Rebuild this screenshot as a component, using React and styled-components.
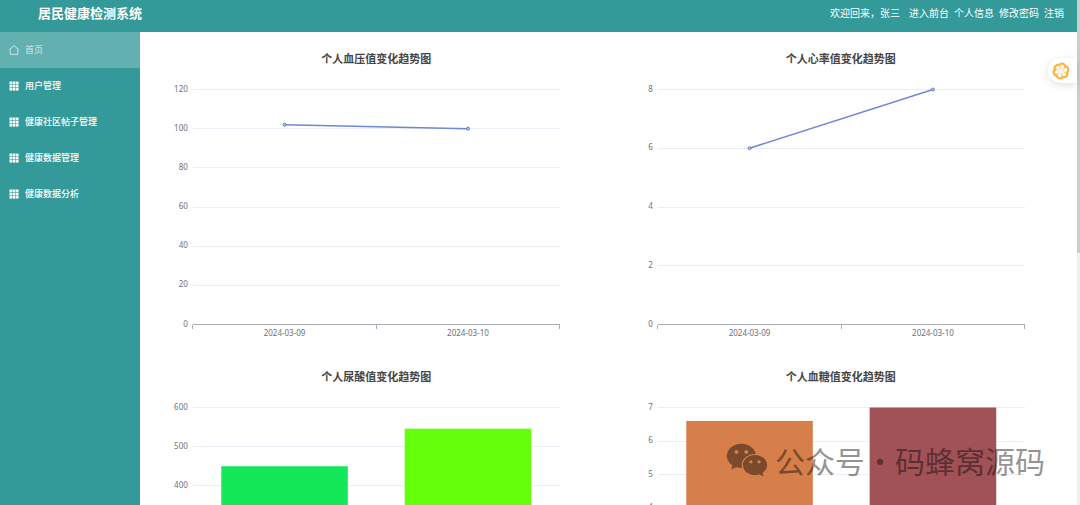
import { createGlobalStyle, styled } from "styled-components";
import { AiFillWechat } from "react-icons/ai";

const GlobalStyle = createGlobalStyle`
  * {
    box-sizing: border-box;
    margin: 0;
    padding: 0;
  }
  body {
    font-family: "Noto Sans", "Noto Sans CJK SC", sans-serif;
    background-color: #fff;
    overflow: hidden;
  }
  a {
    color: inherit;
    text-decoration: none;
  }
  ul {
    list-style: none;
  }
`;

const Shell = styled.div`
  display: flex;
  height: 100vh;
`;

const Page = styled.div`
  position: relative;
  flex: 1;
  min-width: 0;
  display: flex;
  flex-direction: column;
`;

const Header = styled.header`
  flex: none;
  display: flex;
  justify-content: space-between;
  align-items: center;
  height: 32px;
  padding: 0 13px 6px 38px;
  background-color: #339999;
  color: #fff;
  h1 {
    font-family: "Noto Sans CJK SC", sans-serif;
    font-size: 13px;
    line-height: 20px;
    font-weight: 700;
  }
`;

const UserNav = styled.nav`
  display: flex;
  gap: 5px;
  font-family: "Noto Sans CJK SC", sans-serif;
  font-size: 10px;
  line-height: 16px;
  span {
    margin-right: 4px;
  }
`;

const Body = styled.div`
  flex: 1;
  min-height: 0;
  display: flex;
`;

const Sidebar = styled.nav`
  flex: none;
  width: 140px;
  background-color: #339999;
`;

const MenuLink = styled.a`
  display: flex;
  align-items: center;
  gap: 6px;
  height: 36px;
  padding: 0 9px 1px;
  font-family: "Noto Sans CJK SC", sans-serif;
  font-size: 9px;
  font-weight: ${({ $active }) => ($active ? 400 : 500)};
  background-color: ${({ $active }) => ($active ? "#62b0af" : "transparent")};
  && {
    color: ${({ $active }) => ($active ? "#d4ebea" : "#fff")};
  }
  svg {
    width: 10px;
    height: 10px;
  }
`;

const Main = styled.main`
  flex: 1;
  min-width: 0;
  overflow-y: auto;
  scrollbar-width: none;
  display: grid;
  grid-template-columns: 1fr 1fr;
  align-content: start;
  column-gap: 6px;
  padding: 0 7px;
`;

const Panel = styled.section`
  padding-top: 18px;
  h2 {
    margin-bottom: 1px;
    font-family: "Noto Sans CJK SC", sans-serif;
    font-size: 11px;
    line-height: 16px;
    font-weight: 700;
    text-align: center;
    color: #464646;
  }
`;

const Plot = styled.svg`
  display: block;
  width: 100%;
  height: 283px;
  font-size: 8px;
  line {
    shape-rendering: crispEdges;
  }
  text {
    fill: #6e7079;
  }
  .split {
    stroke: #e9edf6;
  }
  .axis {
    stroke: #a9abb5;
  }
  .series {
    stroke: #6f88d6;
    stroke-width: 1.5;
    shape-rendering: auto;
  }
  circle {
    fill: #b9c5ea;
    stroke: #5f79cc;
  }
`;

const FloatButton = styled.button`
  position: absolute;
  top: 58px;
  right: 0;
  display: flex;
  align-items: center;
  width: 29px;
  height: 25px;
  padding-left: 4px;
  border: 0;
  border-radius: 13px 0 0 13px;
  background-color: #fff;
  box-shadow: 0 2px 9px rgba(0, 0, 0, 0.12);
  svg {
    width: 18px;
    height: 18px;
  }
`;

const Watermark = styled.div`
  position: absolute;
  right: 32px;
  bottom: 22px;
  display: flex;
  align-items: center;
  color: #000;
  opacity: 0.42;
  font-family: "Noto Sans CJK SC", sans-serif;
  font-size: 30px;
  line-height: 44px;
  pointer-events: none;
  svg {
    width: 46px;
    height: 46px;
    margin-right: 5px;
  }
  i {
    width: 30px;
    font-style: normal;
    text-align: center;
  }
`;

const ScrollTrack = styled.div`
  flex: none;
  width: 3px;
  background-color: #f1f1f1;
`;

const ScrollThumb = styled.div`
  height: 50%;
  background-color: #cdcdcd;
`;

const HomeIcon = () => (
  <svg viewBox="0 0 10 10" fill="none" stroke="currentColor" strokeWidth="0.9" aria-hidden="true">
    <path d="M0.6 4.4 L5 0.7 L9.4 4.4 M1.2 4 V9.4 H8.8 V4" />
  </svg>
);

const GridIcon = () => (
  <svg viewBox="0 0 10 10" fill="currentColor" aria-hidden="true">
    {[0.5, 3.7, 6.9].map((y) =>
      [0.5, 3.7, 6.9].map((x) => <rect key={`${x}-${y}`} x={x} y={y} width="2.7" height="2.7" />)
    )}
  </svg>
);

// six petals, each one curling in towards the centre
const FlowerIcon = () => (
  <svg viewBox="-9 -9 18 18" fill="none" strokeLinecap="round" aria-hidden="true">
    {[0, 60, 120, 180, 240, 300].map((deg) => (
      <g key={deg} transform={`rotate(${deg + 12})`}>
        <path d="M-3 -5.6 C-1.8 -8.4 2.8 -8 3.2 -4.8" stroke="#ffb240" strokeWidth="2.1" />
        <path d="M3.2 -4.8 C3.2 -3.2 2.2 -2.2 0.6 -2.6" stroke="#ffcf8c" strokeWidth="1.2" />
      </g>
    ))}
  </svg>
);

const TOP = 22.5;
const HEIGHT = 235;
const DATES = ["2024-03-09", "2024-03-10"];
const CENTERS = [30, 70];

const charts = [
  { title: "个人血压值变化趋势图", type: "line", max: 120, step: 20, values: [102, 100] },
  { title: "个人心率值变化趋势图", type: "line", max: 8, step: 2, values: [6, 8] },
  {
    title: "个人尿酸值变化趋势图",
    type: "bar",
    max: 600,
    step: 100,
    values: [450, 546],
    colors: ["#15e858", "#64ff0a"],
  },
  {
    title: "个人血糖值变化趋势图",
    type: "bar",
    max: 7,
    step: 1,
    values: [6.6, 7],
    colors: ["#d67f4b", "#a15257"],
  },
];

const Chart = ({ title, type, max, step, values, colors }) => {
  const toY = (v) => TOP + HEIGHT * (1 - v / max);
  const ticks = [];
  for (let v = 0; v <= max; v += step) ticks.push(v);

  return (
    <Panel>
      <h2>{title}</h2>
      <Plot role="img" aria-label={title}>
        {ticks.map((v) => (
          <g key={v}>
            {v > 0 && <line className="split" x1="10%" x2="90%" y1={toY(v)} y2={toY(v)} />}
            <text x="10%" dx="-5" y={toY(v) + 2} textAnchor="end">
              {v}
            </text>
          </g>
        ))}
        {type === "bar" &&
          values.map((v, i) => (
            <rect
              key={DATES[i]}
              x={`${CENTERS[i] - 13.8}%`}
              y={toY(v)}
              width="27.6%"
              height={toY(0) - toY(v)}
              fill={colors[i]}
            />
          ))}
        <line className="axis" x1="10%" x2="90%" y1={toY(0)} y2={toY(0)} />
        {["10%", "50%", "90%"].map((x) => (
          <line key={x} className="axis" x1={x} x2={x} y1={toY(0)} y2={toY(0) + 4} />
        ))}
        {DATES.map((date, i) => (
          <text key={date} x={`${CENTERS[i]}%`} y={toY(0) + 11} textAnchor="middle">
            {date}
          </text>
        ))}
        {type === "line" && (
          <>
            <line className="series" x1="30%" x2="70%" y1={toY(values[0])} y2={toY(values[1])} />
            {values.map((v, i) => (
              <circle key={DATES[i]} cx={`${CENTERS[i]}%`} cy={toY(v)} r="1.5" />
            ))}
          </>
        )}
      </Plot>
    </Panel>
  );
};

const menu = ["首页", "用户管理", "健康社区帖子管理", "健康数据管理", "健康数据分析"];

const App = () => {
  return (
    <>
      <GlobalStyle />
      <Shell>
        <Page>
          <Header>
            <h1>居民健康检测系统</h1>
            <UserNav>
              <span>欢迎回来，张三</span>
              <a href="#front">进入前台</a>
              <a href="#profile">个人信息</a>
              <a href="#password">修改密码</a>
              <a href="#logout">注销</a>
            </UserNav>
          </Header>
          <Body>
            <Sidebar>
              <ul>
                {menu.map((name, i) => (
                  <li key={name}>
                    <MenuLink href={`#menu-${i}`} $active={i === 0}>
                      {i === 0 ? <HomeIcon /> : <GridIcon />}
                      {name}
                    </MenuLink>
                  </li>
                ))}
              </ul>
            </Sidebar>
            <Main>
              {charts.map((chart) => (
                <Chart key={chart.title} {...chart} />
              ))}
            </Main>
          </Body>
          <FloatButton type="button" aria-label="助手">
            <FlowerIcon />
          </FloatButton>
          <Watermark>
            <AiFillWechat />
            公众号<i>·</i>码蜂窝源码
          </Watermark>
        </Page>
        <ScrollTrack>
          <ScrollThumb />
        </ScrollTrack>
      </Shell>
    </>
  );
};

export default App;
